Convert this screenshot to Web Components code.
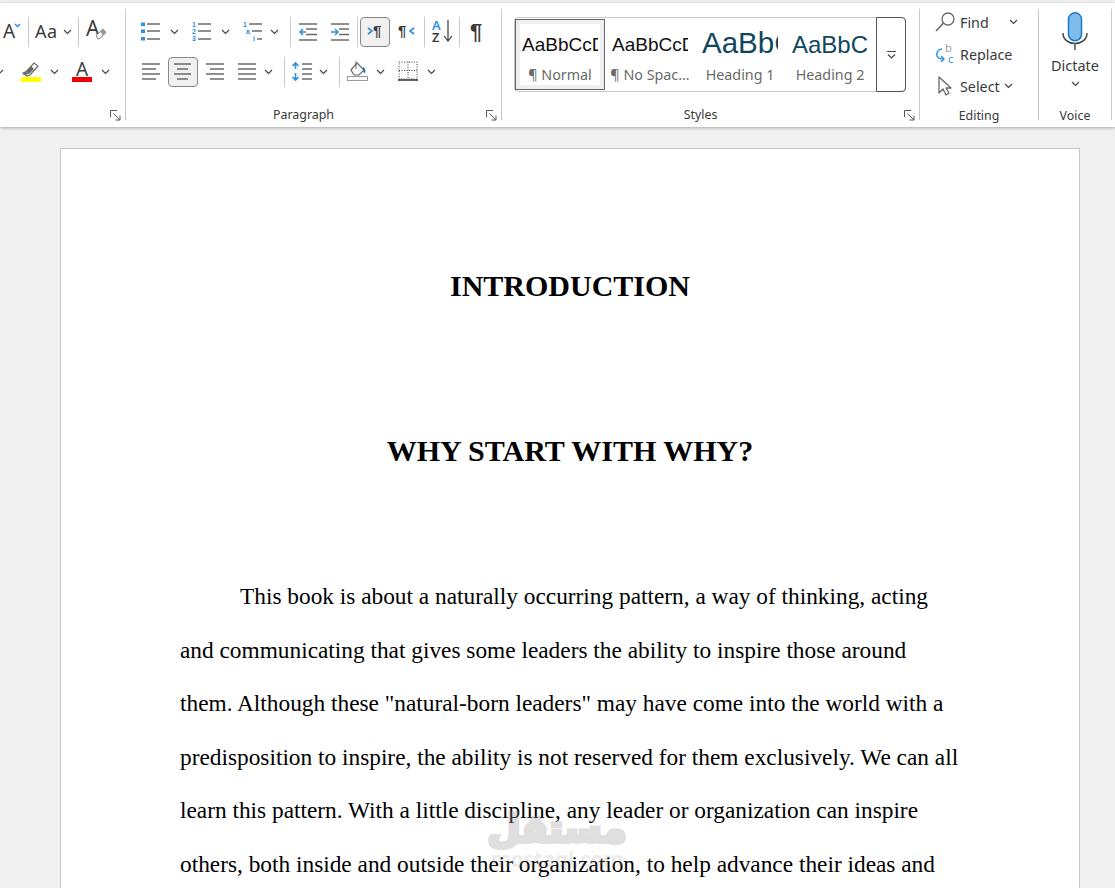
<!DOCTYPE html>
<html>
<head>
<meta charset="utf-8">
<title>Document</title>
<style>
html, body { margin: 0; height: 888px; overflow: hidden; background: #f0f0f0; }
</style>
</head>
<body>
<word-app>
  <word-ribbon slot="ribbon">
    <rb-group label="" launcher w="126" class="font">
      <rb-row>
        <rb-icon icon="growfont" w="20" m="3"></rb-icon>
        <rb-sep m="5"></rb-sep>
        <rb-icon icon="case" w="24" m="6"></rb-icon>
        <rb-chev m="4"></rb-chev>
        <rb-sep m="6"></rb-sep>
        <rb-icon icon="clearfmt" w="20" m="7"></rb-icon>
      </rb-row>
      <rb-row>
        <rb-chev m="-5"></rb-chev>
        <rb-icon icon="highlight" w="20" m="17"></rb-icon>
        <rb-chev m="9"></rb-chev>
        <rb-icon icon="fontcolor" w="20" m="13"></rb-icon>
        <rb-chev m="9"></rb-chev>
      </rb-row>
    </rb-group>
    <rb-group label="Paragraph" launcher w="376">
      <rb-row>
        <rb-icon icon="bullets" w="20" m="14"></rb-icon>
        <rb-chev m="10"></rb-chev>
        <rb-icon icon="numbers" w="20" m="13"></rb-icon>
        <rb-chev m="9"></rb-chev>
        <rb-icon icon="multilevel" w="20" m="13"></rb-icon>
        <rb-chev m="7"></rb-chev>
        <rb-sep m="11"></rb-sep>
        <rb-icon icon="outdent" w="20" m="7"></rb-icon>
        <rb-icon icon="indent" w="20" m="12"></rb-icon>
        <rb-sep m="7"></rb-sep>
        <rb-icon icon="ltr" w="30" m="2" pressed></rb-icon>
        <rb-icon icon="rtl" w="20" m="8"></rb-icon>
        <rb-sep m="6"></rb-sep>
        <rb-icon icon="sort" w="24" m="6"></rb-icon>
        <rb-sep m="4"></rb-sep>
        <rb-icon icon="pilcrow" w="20" m="8"></rb-icon>
      </rb-row>
      <rb-row>
        <rb-icon icon="alignleft" w="20" m="15"></rb-icon>
        <rb-icon icon="aligncenter" w="30" m="7" pressed></rb-icon>
        <rb-icon icon="alignright" w="20" m="7"></rb-icon>
        <rb-icon icon="justify" w="20" m="12"></rb-icon>
        <rb-chev m="7"></rb-chev>
        <rb-sep m="11"></rb-sep>
        <rb-icon icon="spacing" w="22" m="6"></rb-icon>
        <rb-chev m="6"></rb-chev>
        <rb-sep m="11"></rb-sep>
        <rb-icon icon="shading" w="22" m="7"></rb-icon>
        <rb-chev m="7"></rb-chev>
        <rb-icon icon="borders" w="20" m="13"></rb-icon>
        <rb-chev m="9"></rb-chev>
      </rb-row>
    </rb-group>
    <rb-group label="Styles" launcher w="418">
      <style-gallery>
        <style-tile selected name="¶ Normal" preview="AaBbCcDdEe" size="19" color="#111"></style-tile>
        <style-tile name="¶ No Spac..." preview="AaBbCcDdEe" size="19" color="#111"></style-tile>
        <style-tile name="Heading 1" preview="AaBbCc" size="29.5" color="#0f4761" lift="2"></style-tile>
        <style-tile name="Heading 2" preview="AaBbC" size="24" color="#0f4761"></style-tile>
      </style-gallery>
    </rb-group>
    <rb-group label="Editing" w="119" plain>
      <rb-menu icon="find" text="Find" gap="20"></rb-menu>
      <rb-menu icon="replace" text="Replace"></rb-menu>
      <rb-menu icon="select" text="Select" gap="4"></rb-menu>
    </rb-group>
    <rb-group label="Voice" w="73" plain>
      <rb-dictate></rb-dictate>
    </rb-group>
  </word-ribbon>
  <doc-page slot="page">
    <h1>INTRODUCTION</h1>
    <h1 class="second">WHY START WITH WHY?</h1>
    <p>This book is about a naturally occurring pattern, a way of thinking, acting and communicating that gives some leaders the ability to inspire those around them. Although these "natural-born leaders" may have come into the world with a predisposition to inspire, the ability is not reserved for them exclusively. We can all learn this pattern. With a little discipline, any leader or organization can inspire others, both inside and outside their organization, to help advance their ideas and</p>
  </doc-page>
  <site-mark slot="mark"></site-mark>
</word-app>

<script>
const BLUE = '#2f8fdf';
const GREY = '#6a6a6a';
const DARK = '#3c3c3c';
const FONT = '"Noto Sans", "Open Sans", sans-serif';

function lines(rows, color, width) {
    return rows.map(([x1, y, x2]) =>
        `<path d="M${x1} ${y}H${x2}" stroke="${color || GREY}" stroke-width="${width || 1.5}"/>`
    ).join('');
}

const ICONS = {
    growfont: [20, 20, `<text x="0" y="17" font-size="19" fill="${DARK}" font-family="Noto Sans">A</text>
        <path d="M12 3l2.5 2.5L17 3" fill="none" stroke="${BLUE}" stroke-width="1.5"/>`],
    case: [24, 20, `<text x="0" y="16.5" font-size="18" fill="${DARK}" font-family="Noto Sans" textLength="22">Aa</text>`],
    clearfmt: [20, 22, `<text x="0" y="16" font-size="21" fill="${DARK}" font-family="Noto Sans">A</text>
        <path d="M10 15.5l7-6.5 3 3.5-7 6.5h-1z" fill="#fff" stroke="#7a7a7a"/><path d="M14 11.5l3-2.5 3 3.5-3 3z" fill="#9a9a9a"/>`],
    highlight: [20, 22, `<path d="M2 13l3-1 8-9 4 3-8 9-3 1z" fill="#fff" stroke="${GREY}" stroke-width="1.2"/>
        <path d="M2 15l2-4 4 3z M5 11l5-5 3 3-5 5z" fill="${GREY}"/><rect x="0" y="17" width="20" height="5" fill="#ffff00"/>`],
    fontcolor: [20, 22, `<text x="10" y="15.5" text-anchor="middle" font-size="19" fill="${DARK}" font-family="Noto Sans">A</text>
        <rect x="0" y="17" width="20" height="5" fill="#f00000"/>`],
    bullets: [20, 20, `<g fill="${BLUE}"><rect x="1" y="1.5" width="4" height="3.5"/><rect x="1" y="8.5" width="4" height="3.5"/><rect x="1" y="16" width="4" height="3.5"/></g>
        ${lines([[7, 3, 20], [7, 10, 20], [7, 18, 20]])}`],
    numbers: [20, 20, `<g font-size="7" font-weight="700" fill="${BLUE}" font-family="Liberation Sans"><text y="6">1</text><text y="13">2</text><text y="20">3</text></g>
        ${lines([[6, 3, 19], [6, 10, 19], [6, 18, 19]])}`],
    multilevel: [20, 20, `<g font-size="7" font-weight="700" fill="${BLUE}" font-family="Liberation Sans"><text y="6">1</text><text x="3" y="13">a</text><text x="10" y="20">i</text></g>
        ${lines([[6, 3, 19], [9, 10, 19], [14, 18, 19]])}`],
    outdent: [20, 20, `${lines([[1, 3, 19], [8, 8, 19], [8, 13.5, 19], [1, 19, 19]])}
        <path d="M8 11H2M5 8l-3 3 3 3" fill="none" stroke="${BLUE}" stroke-width="1.5"/>`],
    indent: [20, 20, `${lines([[1, 3, 19], [9, 8, 19], [9, 13.5, 19], [1, 19, 19]])}
        <path d="M1 11h7M5 8l3 3-3 3" fill="none" stroke="${BLUE}" stroke-width="1.5"/>`],
    ltr: [30, 20, `<path d="M8 7l4 3-4 3" fill="none" stroke="${BLUE}" stroke-width="1.6"/>
        <text x="13" y="15" font-size="15" font-weight="700" fill="${DARK}" font-family="Liberation Sans">¶</text>`],
    rtl: [20, 20, `<text x="0" y="15" font-size="15" font-weight="700" fill="${DARK}" font-family="Liberation Sans">¶</text>
        <path d="M16 7l-4 3 4 3" fill="none" stroke="${BLUE}" stroke-width="1.6"/>`],
    sort: [24, 24, `<text x="1" y="11" font-size="13" fill="${BLUE}" font-weight="600" font-family="Noto Sans">A</text>
        <text x="1" y="23" font-size="13" fill="${DARK}" font-weight="600" font-family="Noto Sans">Z</text>
        <path d="M17 1v21M13 17l4 5 4-5" fill="none" stroke="${DARK}" stroke-width="1.2"/>`],
    pilcrow: [20, 24, `<text x="2" y="20" font-size="22" font-weight="700" fill="${DARK}" font-family="Liberation Sans">¶</text>`],
    alignleft: [20, 20, lines([[1, 3, 19], [1, 8, 15], [1, 13, 19], [1, 18, 15]])],
    aligncenter: [30, 20, lines([[6, 3, 23], [9, 8, 20], [6, 13, 23], [9, 18, 20]])],
    alignright: [20, 20, lines([[1, 3, 19], [5, 8, 19], [1, 13, 19], [5, 18, 19]])],
    justify: [20, 20, lines([[1, 3, 19], [1, 8, 19], [1, 13, 19], [1, 18, 19]])],
    spacing: [22, 20, `${lines([[11, 3, 21], [11, 8, 21], [11, 13, 21], [11, 18, 21]])}
        <path d="M4.5 2v6M1.5 5l3-3 3 3M4.5 12v7M1.5 16l3 3 3-3" fill="none" stroke="${BLUE}" stroke-width="1.6"/>`],
    shading: [22, 22, `<path d="M4 10l6-7 7 7-5 5H7z" fill="#fff" stroke="${GREY}" stroke-width="1.2"/><path d="M9 1v8" stroke="${GREY}"/>
        <path d="M16 7c2 1 3 4 2 6-2 0-2-3-2-6z" fill="#1f6fb5"/>
        <rect x=".5" y="16.5" width="20" height="4" fill="#fff" stroke="#9a9a9a"/>`],
    borders: [20, 20, `<path d="M1 1h18v17H1zM10 1v17M1 9.5h18" fill="none" stroke="${DARK}" stroke-dasharray="1 1.5"/>
        <path d="M0 19h20" stroke="${DARK}" stroke-width="1.6"/>`],
    find: [20, 20, `<circle cx="13" cy="7" r="6" fill="none" stroke="${GREY}" stroke-width="1.3"/><path d="M8.5 11L1 19" stroke="${GREY}" stroke-width="1.6"/>`],
    replace: [20, 22, `<text x="10" y="9" font-size="11" fill="#a0a0a0" font-family="Noto Sans">b</text>
        <text x="13" y="20" font-size="11" fill="${BLUE}" font-family="Noto Sans">c</text>
        <path d="M7 6C3 6 1 10 2 13s4 3 7 3M6 13l3 3-3 3" fill="none" stroke="${BLUE}" stroke-width="1.4"/>`],
    select: [20, 20, `<path d="M4 1v16l4-4 3 6 3-2-3-5h5z" fill="#fff" stroke="${GREY}" stroke-width="1.3" stroke-linejoin="round"/>`],
    mic: [26, 38, `<rect x="6.5" y=".8" width="13" height="28" rx="6.5" fill="#7dbcec" stroke="#1f78c8" stroke-width="1.5"/>
        <path d="M1 21c0 14 24 14 24 0" fill="none" stroke="${DARK}" stroke-width="1.4"/><path d="M13 31v7" stroke="${GREY}" stroke-width="1.8"/>`]
};

function iconSvg(name) {
    const [w, h, body] = ICONS[name];
    return `<svg xmlns="http://www.w3.org/2000/svg" width="${w}" height="${h}" viewBox="0 0 ${w} ${h}" style="display:block;overflow:visible">${body}</svg>`;
}

const CHEVRON = `<svg width="9" height="6" viewBox="0 0 9 6" style="display:block"><path d="M1 1l3.5 3.5L8 1" fill="none" stroke="#444" stroke-width="1.2"/></svg>`;

class WordApp extends HTMLElement {
    constructor() {
        super();
        this.attachShadow({ mode: 'open' }).innerHTML = `
        <style>
            :host { display: block; position: relative; height: 888px; overflow: hidden; background: #f0f0f0; }
            .canvas { padding: 21px 35px 0 60px; }
        </style>
        <slot name="ribbon"></slot>
        <div class="canvas"><slot name="page"></slot></div>
        <slot name="mark"></slot>`;
    }
}

class WordRibbon extends HTMLElement {
    constructor() {
        super();
        this.attachShadow({ mode: 'open' }).innerHTML = `
        <style>
            :host {
                display: flex; height: 124px; margin-top: 3px; background: #fff;
                box-shadow: 0 1px 3px rgba(0,0,0,.3); overflow: hidden;
                font-family: ${FONT}; position: relative;
            }
        </style>
        <slot></slot>`;
    }
}

class RbGroup extends HTMLElement {
    connectedCallback() {
        const launcher = this.hasAttribute('launcher')
            ? `<svg class="launcher" width="11" height="11" viewBox="0 0 11 11"><path d="M.5 7V.5H7M3.5 3.5l6 6M10 5.5V10H5.5" fill="none" stroke="#555"/></svg>`
            : '';
        this.attachShadow({ mode: 'open' }).innerHTML = `
        <style>
            :host {
                display: flex; flex-direction: column; box-sizing: border-box; flex: none;
                width: ${this.getAttribute('w')}px; height: 111px; margin-top: 6px;
                border-right: 1px solid #c8c8c8; position: relative;
            }
            .body { flex: 1; display: flex; flex-direction: column; min-height: 0; }
            .label {
                height: 17px; line-height: 17px; text-align: center;
                margin-bottom: ${this.hasAttribute('plain') ? -4 : -3}px;
                font-size: 12.4px; color: #3a3a3a;
                padding-right: ${this.hasAttribute('launcher') ? 20 : 0}px;
            }
            .launcher { position: absolute; right: 4px; bottom: -1px; }
        </style>
        <div class="body"><slot></slot></div>
        <div class="label">${this.getAttribute('label')}</div>
        ${launcher}`;
    }
}

class RbRow extends HTMLElement {
    constructor() {
        super();
        this.attachShadow({ mode: 'open' }).innerHTML = `
        <style>
            :host { display: flex; align-items: center; height: 30px; margin-top: 8px; }
            :host(:nth-child(2)) { margin-top: 10px; }
        </style>
        <slot></slot>`;
    }
}

class RbIcon extends HTMLElement {
    connectedCallback() {
        const pressed = this.hasAttribute('pressed');
        this.attachShadow({ mode: 'open' }).innerHTML = `
        <style>
            :host {
                display: flex; align-items: center; justify-content: center; flex: none; box-sizing: border-box;
                width: ${this.getAttribute('w')}px; height: 30px; padding-bottom: 2px;
                margin-left: ${this.getAttribute('m') || 0}px;
                ${pressed ? 'background: #f0f0f0; border: 1px solid #8a8a8a; border-radius: 4px;' : ''}
            }
        </style>
        ${iconSvg(this.getAttribute('icon'))}`;
    }
}

class RbChev extends HTMLElement {
    connectedCallback() {
        this.attachShadow({ mode: 'open' }).innerHTML = `
        <style>
            :host { display: block; flex: none; width: 9px; margin-left: ${this.getAttribute('m') || 0}px; }
        </style>
        ${CHEVRON}`;
    }
}

class RbSep extends HTMLElement {
    connectedCallback() {
        this.attachShadow({ mode: 'open' }).innerHTML = `
        <style>
            :host { display: block; flex: none; width: 1px; height: 30px; background: #c8c8c8; margin-left: ${this.getAttribute('m') || 0}px; }
        </style>`;
    }
}

class StyleGallery extends HTMLElement {
    constructor() {
        super();
        this.attachShadow({ mode: 'open' }).innerHTML = `
        <style>
            :host {
                display: flex; box-sizing: border-box; width: 392px; height: 75px;
                margin: 8px 0 0 12px; border: 1px solid #c8c8c8; border-radius: 4px;
            }
            .tiles { display: flex; flex: 1; padding: 1px 0 1px 0; }
            .more {
                flex: none; box-sizing: border-box; width: 30px; margin: -1px -1px -1px 0;
                border: 1px solid #555; border-radius: 0 4px 4px 0;
                display: flex; align-items: center; justify-content: center;
            }
        </style>
        <div class="tiles"><slot></slot></div>
        <div class="more"><svg width="9" height="8" viewBox="0 0 9 8"><path d="M0 .5h9" stroke="#444"/><path d="M1 3.5L4.5 7 8 3.5" fill="none" stroke="#444" stroke-width="1.1"/></svg></div>`;
    }
}

class StyleTile extends HTMLElement {
    connectedCallback() {
        const selected = this.hasAttribute('selected');
        const lift = parseInt(this.getAttribute('lift') || 0);
        this.attachShadow({ mode: 'open' }).innerHTML = `
        <style>
            :host {
                display: flex; flex-direction: column; align-items: center; flex: none; box-sizing: border-box;
                width: 90px; height: 71px;
                ${selected ? 'border: 1px solid #666; box-shadow: inset 0 0 0 4px #efefef;' : 'border: 1px solid transparent;'}
            }
            .preview {
                width: 76px; height: 44px; line-height: ${48 - lift * 2}px; margin-top: 1px; overflow: hidden; white-space: nowrap;
                font-family: "Liberation Sans", sans-serif; font-size: ${this.getAttribute('size')}px;
                color: ${this.getAttribute('color')};
            }
            .name { font-size: 14.3px; line-height: 20px; color: #6a6a6a; white-space: nowrap; }
        </style>
        <div class="preview">${this.getAttribute('preview')}</div>
        <div class="name">${this.getAttribute('name')}</div>`;
    }
}

class RbMenu extends HTMLElement {
    connectedCallback() {
        this.attachShadow({ mode: 'open' }).innerHTML = `
        <style>
            :host {
                display: flex; align-items: center; height: 32px; padding-left: 15px;
                font-size: 14.3px; color: #3a3a3a;
            }
            :host(:first-child) { margin-top: -3px; }
            .ic { width: 20px; margin-right: 5px; flex: none; }
            .chev { margin-left: ${this.getAttribute('gap')}px; }
        </style>
        <div class="ic">${iconSvg(this.getAttribute('icon'))}</div>
        <span>${this.getAttribute('text')}</span>
        ${this.hasAttribute('gap') ? `<div class="chev">${CHEVRON}</div>` : ''}`;
    }
}

class RbDictate extends HTMLElement {
    constructor() {
        super();
        this.attachShadow({ mode: 'open' }).innerHTML = `
        <style>
            :host {
                display: flex; flex-direction: column; align-items: center;
                margin-top: 3px; font-size: 14.5px; color: #3a3a3a;
            }
            .name { line-height: 20px; margin-top: 5px; }
            .chev { margin-top: 6px; }
        </style>
        ${iconSvg('mic')}
        <div class="name">Dictate</div>
        <div class="chev">${CHEVRON}</div>`;
    }
}

class DocPage extends HTMLElement {
    constructor() {
        super();
        this.attachShadow({ mode: 'open' }).innerHTML = `
        <style>
            :host {
                display: block; box-sizing: border-box; width: 1020px; height: 1320px;
                padding: 117px 119px 0; background: #fff; border: 1px solid #c6c6c6;
                font-family: "Liberation Serif", serif; color: #000;
            }
            ::slotted(h1) { margin: 0; text-align: center; font-size: 30px; line-height: 40px; font-weight: 700; }
            ::slotted(h1.second) { margin-top: 125px; }
            ::slotted(p) { margin: 99px 0 0; font-size: 23.33px; line-height: 53.6px; text-indent: 60px; }
        </style>
        <slot></slot>`;
    }
}

class SiteMark extends HTMLElement {
    constructor() {
        super();
        this.attachShadow({ mode: 'open' }).innerHTML = `
        <style>
            :host {
                position: absolute; left: 487px; top: 800px; width: 140px;
                display: flex; flex-direction: column; align-items: center;
                pointer-events: none; color: #969696;
            }
            .ar { font: 700 38px/58px "DejaVu Sans", sans-serif; -webkit-text-stroke: 4px #969696; opacity: .3; }
            .en { font: 700 20.5px/20px "Noto Sans", sans-serif; opacity: .18; margin-top: -9px; }
        </style>
        <div class="ar" dir="rtl">مستقل</div>
        <div class="en">mostaql.com</div>`;
    }
}

customElements.define('word-app', WordApp);
customElements.define('word-ribbon', WordRibbon);
customElements.define('rb-group', RbGroup);
customElements.define('rb-row', RbRow);
customElements.define('rb-icon', RbIcon);
customElements.define('rb-chev', RbChev);
customElements.define('rb-sep', RbSep);
customElements.define('style-gallery', StyleGallery);
customElements.define('style-tile', StyleTile);
customElements.define('rb-menu', RbMenu);
customElements.define('rb-dictate', RbDictate);
customElements.define('doc-page', DocPage);
customElements.define('site-mark', SiteMark);
</script>
</body>
</html>
